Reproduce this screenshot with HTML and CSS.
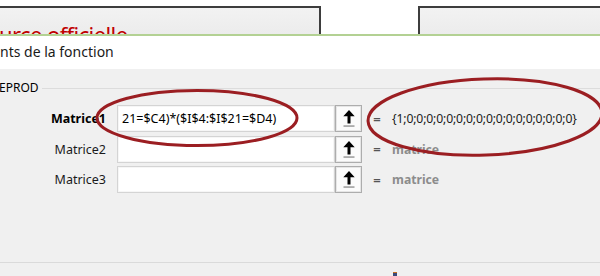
FILE: index.html
```html
<!DOCTYPE html>
<html lang="fr">
<head>
<meta charset="UTF-8" />
<title>Arguments de la fonction</title>
<link rel="stylesheet" href="styles.css">
</head>
<body>
<div id="page">
  <div id="sheet-strip">
    <div class="sheet-panel left">
      <span class="sheet-title">urce officielle</span>
    </div>
    <div class="sheet-gap"></div>
    <div class="sheet-panel right"></div>
  </div>

  <div id="dialog">
    <div class="dlg-head">nts de la fonction</div>
    <div class="dlg-body">
      <div class="group-label">
        <span>EPROD</span>
        <div class="group-line"></div>
      </div>
      <div class="args">
        <div class="arg-row">
          <label class="arg-name active">Matrice1</label>
          <div class="arg-input">21=$C4)*($I$4:$I$21=$D4)</div>
          <button class="ref-btn" aria-label="Réduire"><svg width="12" height="17" viewBox="0 0 12 17"><path d="M6 0 L0.3 6.3 H4.5 V13.5 H7.5 V6.3 H11.7 Z" fill="#000"/><rect x="0.5" y="15.4" width="11" height="1.3" fill="#8a8a8a"/></svg></button>
          <span class="eq">=</span>
          <span class="arg-val">{1;0;0;0;0;0;0;0;0;0;0;0;0;0;0;0;0;0}</span>
        </div>
        <div class="arg-row">
          <label class="arg-name">Matrice2</label>
          <div class="arg-input"></div>
          <button class="ref-btn" aria-label="Réduire"><svg width="12" height="17" viewBox="0 0 12 17"><path d="M6 0 L0.3 6.3 H4.5 V13.5 H7.5 V6.3 H11.7 Z" fill="#000"/><rect x="0.5" y="15.4" width="11" height="1.3" fill="#8a8a8a"/></svg></button>
          <span class="eq">=</span>
          <span class="arg-val hint">matrice</span>
        </div>
        <div class="arg-row">
          <label class="arg-name">Matrice3</label>
          <div class="arg-input"></div>
          <button class="ref-btn" aria-label="Réduire"><svg width="12" height="17" viewBox="0 0 12 17"><path d="M6 0 L0.3 6.3 H4.5 V13.5 H7.5 V6.3 H11.7 Z" fill="#000"/><rect x="0.5" y="15.4" width="11" height="1.3" fill="#8a8a8a"/></svg></button>
          <span class="eq">=</span>
          <span class="arg-val hint">matrice</span>
        </div>
      </div>
      <div class="dlg-sep"></div>
      <div class="dlg-foot"><span class="tiny-icon"></span></div>
    </div>
  </div>

  <!-- annotation circles drawn over the dialog -->
  <svg id="marks" width="600" height="276" viewBox="0 0 600 276">
    <ellipse cx="197" cy="118" rx="100" ry="27.5" fill="none" stroke="#9b1e22" stroke-width="3"/>
    <ellipse cx="485" cy="117" rx="117" ry="38" fill="none" stroke="#9b1e22" stroke-width="3" transform="rotate(-2 485 117)"/>
  </svg>
</div>
</body>
</html>
```

FILE: styles.css
```css
html, body {
  margin: 0;
  padding: 0;
  background: #fff;
  font-family: 'Noto Sans', 'Open Sans', Arial, sans-serif;
  color: #000;
}
#page {
  position: relative;
  width: 600px;
  height: 276px;
  overflow: hidden;
}
#sheet-strip {
  display: flex;
  padding-top: 6px;
  height: 28px;
  border-bottom: 2px solid #b3d193;
}
.sheet-panel {
  background: linear-gradient(#f2f2f2, #ececec);
  border-top: 2px solid #3d3d3d;
  overflow: hidden;
  box-sizing: border-box;
}
.sheet-panel.left {
  width: 321px;
  border-right: 2px solid #3d3d3d;
}
.sheet-panel.right {
  flex: 1;
  border-left: 2px solid #3d3d3d;
}
.sheet-gap {
  width: 97px;
}
.sheet-title {
  display: block;
  margin: 13px 0 0 -1px;
  font-size: 22px;
  line-height: 26px;
  letter-spacing: -0.6px;
  color: #c00000;
  white-space: nowrap;
}
#dialog {
  background: #f0f0f0;
}
.dlg-head {
  background: #fff;
  height: 33px;
  font-size: 14px;
  line-height: 31px;
  color: #1a1a1a;
}
.dlg-body {
  padding-top: 10px;
  height: 233px;
  box-sizing: border-box;
}
.group-label {
  display: flex;
  align-items: center;
  gap: 3px;
  font-size: 12px;
  height: 17px;
  margin-left: -1px;
}
.group-line {
  flex: 1;
  height: 1px;
  background: #dcdcdc;
  margin-top: 1px;
}
.args {
  display: flex;
  flex-direction: column;
  gap: 3.5px;
  margin-top: 9px;
}
.arg-row {
  display: flex;
  align-items: center;
  height: 27px;
}
.arg-name {
  width: 106px;
  text-align: right;
  font-size: 12.5px;
  color: #1a1a1a;
  margin-right: 11px;
}
.arg-name.active {
  font-weight: 700;
  color: #000;
}
.arg-input {
  width: 218px;
  height: 27px;
  box-sizing: border-box;
  background: #fff;
  border: 1px solid #d4d4d4;
  box-shadow: inset 0 0 0 1px #f6f6f6;
  font-size: 12.5px;
  line-height: 25px;
  padding-left: 4px;
  white-space: nowrap;
  overflow: hidden;
}
.ref-btn {
  width: 27px;
  height: 27px;
  box-sizing: border-box;
  padding: 0;
  background: #fbfbfb;
  border: 1px solid #adadad;
  box-shadow: inset 0 0 0 1px #e6e6e6;
  display: flex;
  align-items: center;
  justify-content: center;
}
.eq {
  width: 30px;
  text-align: center;
  font-size: 13px;
  font-weight: 700;
  color: #555;
}
.arg-val {
  font-size: 12.2px;
  letter-spacing: -0.15px;
  white-space: nowrap;
  color: #1a1a1a;
}
.arg-val.hint {
  color: #8c8c8c;
  font-weight: 700;
  letter-spacing: 0;
}
.dlg-sep {
  margin-top: 69px;
  height: 1px;
  background: #dadada;
}
.dlg-foot {
  position: relative;
  height: 14px;
}
.tiny-icon {
  position: absolute;
  left: 393px;
  top: 9px;
  width: 4px;
  height: 4px;
  background: #3a4a7a;
  border-top: 1px solid #c8701e;
}
#marks {
  position: absolute;
  left: 0;
  top: 0;
  pointer-events: none;
}
```
